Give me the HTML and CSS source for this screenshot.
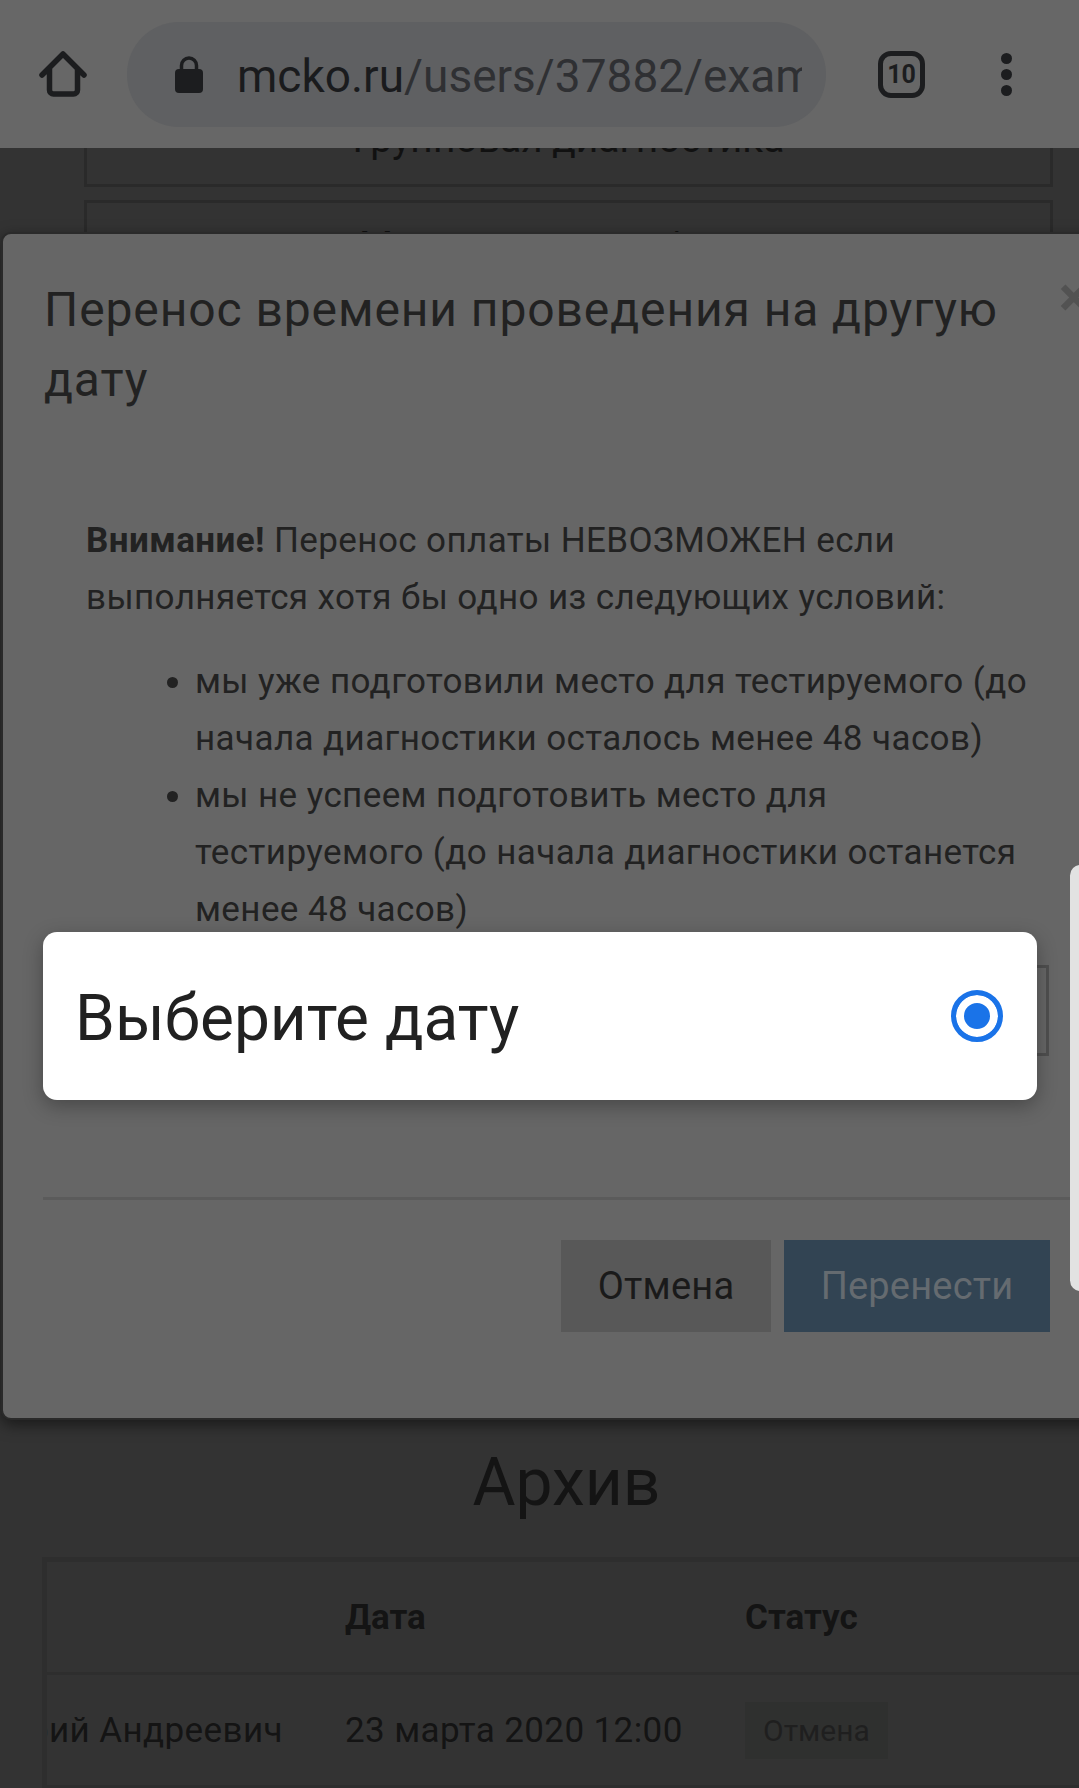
FILE: index.html
```html
<!DOCTYPE html>
<html lang="en">
<head>
    <meta charset="UTF-8">
    <title>Перенос</title>
    <link rel="stylesheet" href="styles.css">
</head>
<body>
    <!-- Browser toolbar -->
    <header class="toolbar">
        <svg class="home-icon" width="52" height="52" viewBox="0 0 52 52">
            <path d="M4 27 L25 6 L46 27 M11.5 21 V42 a4 4 0 0 0 4 4 H35.5 a4 4 0 0 0 4 -4 V21" fill="none" stroke="#1c1d1f" stroke-width="5.5" stroke-linecap="round" stroke-linejoin="round"/>
        </svg>
        <div class="url-pill">
            <svg class="lock-icon" width="28" height="37" viewBox="0 0 28 37">
                <path d="M6.5 15 V9.5 a7.5 7.5 0 0 1 15 0 V15" fill="none" stroke="#1c1d1f" stroke-width="3.5"/>
                <rect x="0" y="13" width="28" height="24" rx="4" fill="#1c1d1f"/>
            </svg>
            <div class="url-text"><span class="url-host">mcko.ru</span>/users/37882/exam</div>
        </div>
        <div class="tab-count">10</div>
        <div class="menu-dots"><i></i><i></i><i></i></div>
    </header>

    <!-- Page behind the modal -->
    <div class="page-top">
        <div class="nav-box nav-box-first"><span>Групповая диагностика</span></div>
        <div class="nav-box nav-box-second"><span>Мои материалы / план</span></div>
    </div>

    <section class="archive">
        <h1>Архив</h1>
        <div class="archive-table">
            <div class="archive-row archive-head">
                <div class="col-name"></div>
                <div class="col-date">Дата</div>
                <div class="col-status">Статус</div>
            </div>
            <div class="archive-row">
                <div class="col-name name-clip">Юрий Андреевич</div>
                <div class="col-date">23 марта 2020 12:00</div>
                <div class="col-status"><span class="badge">Отмена</span></div>
            </div>
        </div>
    </section>

    <div class="modal">
        <div class="modal-head">
            <h2>Перенос времени проведения на другую дату</h2>
            <span class="modal-close">×</span>
        </div>
        <div class="modal-body">
            <p><b>Внимание!</b> Перенос оплаты НЕВОЗМОЖЕН если выполняется хотя бы одно из следующих условий:</p>
            <ul>
                <li>мы уже подготовили место для тестируемого (до начала диагностики осталось менее 48 часов)</li>
                <li>мы не успеем подготовить место для тестируемого (до начала диагностики останется менее 48 часов)</li>
            </ul>
            <div class="date-select"></div>
        </div>
        <div class="modal-foot">
            <button class="btn btn-cancel">Отмена</button>
            <button class="btn btn-primary">Перенести</button>
        </div>
    </div>

    <!-- Native select popup -->
    <div class="picker">
        <span class="picker-label">Выберите дату</span>
        <span class="radio"></span>
    </div>
    <div class="side-handle"></div>
</body>
</html>
```

FILE: styles.css
```css
* {
    box-sizing: border-box;
}

html, body {
    margin: 0;
    height: 1788px;
    overflow: hidden;
}

body {
    position: relative;
    background-color: #333;
    font-family: 'Roboto', sans-serif;
    color: #222;
}

.toolbar {
    height: 148px;
    background-color: #676767;
    display: flex;
    align-items: center;
    padding: 0 0 0 38px;
    position: relative;
    z-index: 2;
}

.home-icon {
    flex: none;
}

.url-pill {
    width: 699px;
    height: 105px;
    margin-left: 37px;
    border-radius: 52px;
    background-color: #5f6062;
    display: flex;
    align-items: center;
    padding: 0 24px 0 48px;
}

.lock-icon {
    flex: none;
    margin-right: 34px;
}

.url-text {
    font-size: 46px;
    padding-top: 3px;
    color: #2f3033;
    white-space: nowrap;
    overflow: hidden;
}

.url-host {
    color: #1a1b1d;
}

.tab-count {
    width: 47px;
    height: 47px;
    margin-left: 52px;
    border: 5px solid #1c1d1f;
    border-radius: 13px;
    font-size: 25px;
    font-weight: 700;
    color: #1c1d1f;
    display: flex;
    align-items: center;
    justify-content: center;
}

.menu-dots {
    margin-left: 76px;
    display: flex;
    flex-direction: column;
    gap: 5px;
}

.menu-dots i {
    width: 11px;
    height: 11px;
    border-radius: 50%;
    background-color: #1c1d1f;
}

.page-top {
    height: 87px;
    padding: 0 26px 0 84px;
    overflow: hidden;
}

.nav-box {
    border: 3px solid #2a2a2a;
    text-align: center;
    font-size: 39px;
    color: #111;
    overflow: hidden;
}

.nav-box-first {
    height: 39px;
    margin-bottom: 13px;
    border-top: none;
}

.nav-box-first span {
    position: relative;
    top: -32px;
}

.nav-box-second {
    height: 60px;
    padding-top: 20px;
}

.archive {
    margin-top: 1185px;
    width: 1079px;
}

.archive h1 {
    margin: 0;
    padding-top: 25px;
    padding-left: 54px;
    text-align: center;
    font-size: 66px;
    line-height: 76px;
    font-weight: 400;
    color: #141414;
}

.archive-table {
    margin: 36px 0 0 42px;
    border-top: 5px solid #2e2e2e;
    border-left: 5px solid #2e2e2e;
    width: 1100px;
}

.archive-row {
    display: flex;
    height: 113px;
    align-items: center;
    border-bottom: 3px solid #2e2e2e;
    font-size: 35px;
    letter-spacing: 0.4px;
    color: #141414;
}

.archive-head {
    font-weight: 700;
    letter-spacing: 0;
}

.col-name {
    width: 298px;
    flex: none;
    overflow: hidden;
    white-space: nowrap;
    direction: rtl;
    padding-right: 62px;
}

.col-date {
    width: 400px;
    flex: none;
}

.badge {
    display: inline-block;
    background-color: #2f302f;
    color: #1f1f1f;
    font-size: 30px;
    letter-spacing: 0;
    line-height: 35px;
    padding: 11px 18px;
}

.modal {
    position: absolute;
    top: 232px;
    left: 1px;
    width: 1200px;
    height: 1188px;
    background-color: #666;
    border: 2px solid #2a2a2a;
    border-radius: 10px;
    box-shadow: 0 5px 15px rgba(0, 0, 0, 0.5);
}

.modal-head {
    padding: 41px 0 0 41px;
    position: relative;
}

.modal-head h2 {
    margin: 0;
    width: 980px;
    font-size: 48px;
    line-height: 70px;
    font-weight: 400;
    letter-spacing: 0.9px;
    color: #222;
}

.modal-close {
    position: absolute;
    left: 1056px;
    top: 30px;
    font-size: 56px;
    font-weight: 700;
    color: #525252;
}

.modal-body {
    padding: 97px 0 0 83px;
    width: 1035px;
    font-size: 35px;
    line-height: 57px;
    letter-spacing: 0.4px;
    color: #222;
}

.modal-body p {
    margin: 0 0 27px;
}

.modal-body b {
    font-weight: 700;
}

.modal-body ul {
    margin: 0;
    padding-left: 109px;
}

.date-select {
    margin: 27px -11px 141px 0;
    height: 91px;
    border: 3px solid #4f4f4f;
}

.modal-foot {
    margin-left: 40px;
    border-top: 3px solid #5b5b5b;
    display: flex;
    gap: 13px;
    padding: 40px 0 0 518px;
}

.btn {
    height: 92px;
    border: none;
    font-family: inherit;
    font-size: 38px;
    letter-spacing: 0.2px;
}

.btn-cancel {
    width: 210px;
    background-color: #585858;
    color: #1a1a1a;
}

.btn-primary {
    width: 266px;
    background-color: #324453;
    color: #656b70;
}

.picker {
    position: absolute;
    top: 932px;
    left: 43px;
    width: 994px;
    height: 168px;
    background-color: #fff;
    border-radius: 14px;
    box-shadow: 0 6px 20px rgba(0, 0, 0, 0.3);
    display: flex;
    align-items: center;
    justify-content: space-between;
    padding: 0 34px 0 32px;
    z-index: 3;
}

.picker-label {
    font-size: 64px;
    margin-top: 4px;
    color: #212121;
}

.radio {
    width: 52px;
    height: 52px;
    border-radius: 50%;
    border: 5px solid #1a73e8;
    background-color: #1a73e8;
    box-shadow: inset 0 0 0 8px #fff;
}

.side-handle {
    position: absolute;
    top: 865px;
    right: -12px;
    width: 21px;
    height: 426px;
    background-color: #e2e2e2;
    border-radius: 12px;
    z-index: 4;
}
```
